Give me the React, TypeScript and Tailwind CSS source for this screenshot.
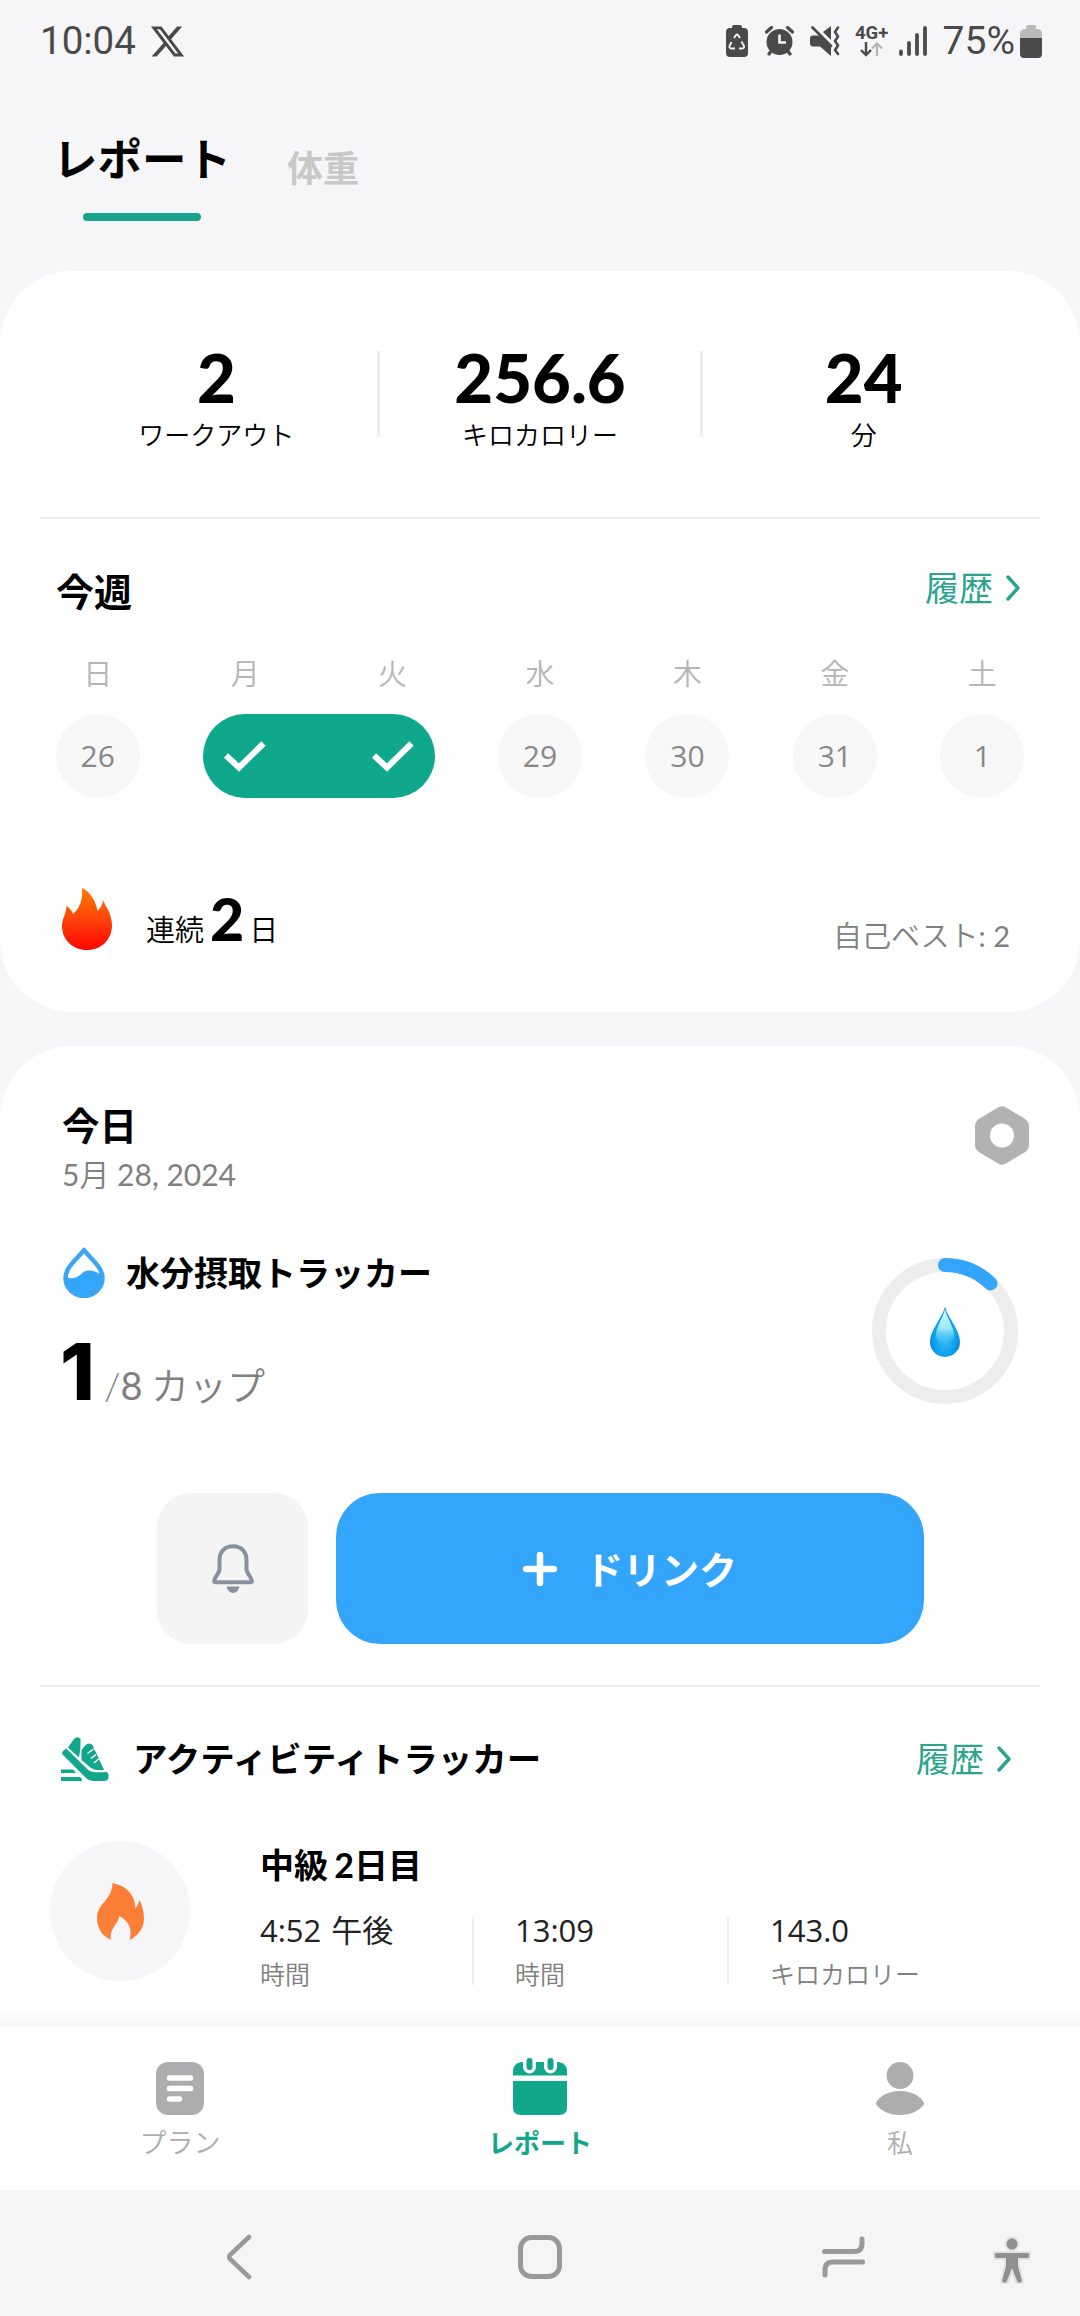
import React from 'react';
import { FaXTwitter } from 'react-icons/fa6';

const FONT = "font-['Lato','Noto_Sans_CJK_JP',sans-serif]";
const FONT_ALT = "font-['Open_Sans','Noto_Sans_CJK_JP',sans-serif]";

interface Stat {
  value: string;
  label: string;
}

const totals: Stat[] = [
  { value: '2', label: 'ワークアウト' },
  { value: '256.6', label: 'キロカロリー' },
  { value: '24', label: '分' },
];

const weekdays = ['日', '月', '火', '水', '木', '金', '土'];
const upcoming = ['29', '30', '31', '1'];

const activityStats: Stat[] = [
  { value: '4:52 午後', label: '時間' },
  { value: '13:09', label: '時間' },
  { value: '143.0', label: 'キロカロリー' },
];

/* ---------- Icons ---------- */

const BatterySaverIcon = () => (
  <svg width="22" height="33" viewBox="0 0 22 33">
    <path d="M6 3V2q0-2 2-2h6q2 0 2 2v1h2q4 0 4 4v21q0 4-4 4H4q-4 0-4-4V7q0-4 4-4z" fill="#4a4a4a" />
    <path d="M8 13l2-3q1-1 2 0l2 3M15.500 16.500l2.500 4.500q.5 2-1.500 2.500H13M9 23.500H5q-2-.5-1.500-2.500L5.500 17" fill="none" stroke="#f6f6f9" strokeWidth="1.800" />
  </svg>
);

const AlarmIcon = () => (
  <svg width="29" height="30" viewBox="0 0 29 30">
    <circle cx="14.500" cy="16" r="13" fill="#4a4a4a" />
    <path d="M1.500 6l5-4.500M27.500 6l-5-4.500M4 28l3-4M25 28l-3-4" stroke="#4a4a4a" strokeWidth="3.200" strokeLinecap="round" />
    <path d="M14.500 8.500v8h6.500" fill="none" stroke="#f6f6f9" strokeWidth="2.600" />
  </svg>
);

const MuteIcon = () => (
  <svg width="30" height="30" viewBox="0 0 30 30">
    <path d="M3 9.500h6l12 11V30L10 20.500H3q-3 0-3-3v-5q0-3 3-3zM13 6l8-6v14z" fill="#4a4a4a" />
    <path d="M2.500 1.500L21 20" stroke="#4a4a4a" strokeWidth="2.600" strokeLinecap="round" />
    <path d="M28 1.500l-3 4.500 3 4.500-3 4.500 3 4.500-3 4.500 3 4" fill="none" stroke="#4a4a4a" strokeWidth="2.600" strokeLinejoin="round" strokeLinecap="round" />
  </svg>
);

const DataArrowsIcon = () => (
  <svg width="23" height="15" viewBox="0 0 23 15">
    <path d="M6 0v13M1 8l5 5 5-5" fill="none" stroke="#4a4a4a" strokeWidth="2.400" />
    <path d="M17 14V2M12 6.500l5-5 5 5" fill="none" stroke="#b5b5b7" strokeWidth="2.200" />
  </svg>
);

const SignalIcon = () => (
  <svg width="29" height="30" viewBox="0 0 29 30">
    <path d="M2 25.500V28M10 17v11M18 9v19M26 2v26" stroke="#4a4a4a" strokeWidth="3.800" strokeLinecap="round" />
  </svg>
);

const BatteryIcon = () => (
  <svg width="22" height="33" viewBox="0 0 22 33">
    <path d="M6 4V2q0-2 2-2h6q2 0 2 2v2h1q5 0 5 5v4H0V9q0-5 5-5z" fill="#bababb" />
    <path d="M0 13h22v16q0 4-4 4H4q-4 0-4-4z" fill="#4a4a4a" />
  </svg>
);

const CheckIcon = () => (
  <svg width="42" height="31" viewBox="0 0 42 31">
    <path d="M2 14.500l13 12L39.500 2.500" fill="none" stroke="#fff" strokeWidth="6" />
  </svg>
);

const StreakFlameIcon = () => (
  <svg width="50" height="62" viewBox="0 0 50 62">
    <defs>
      <linearGradient id="streak" x1="0" y1="0" x2="0" y2="1">
        <stop offset="0" stopColor="#ff7a00" />
        <stop offset="0.500" stopColor="#fe4409" />
        <stop offset="1" stopColor="#ff0500" />
      </linearGradient>
    </defs>
    <path
      d="M20 0C29 4 34 14 35.500 23c3-3 5-6 5.500-11 2 6 9 13 9 25 0 15-11 25-25 25S0 52 0 38c0-8 4-11 4.500-20 3 2 5 4 6.500 8 7-6 10-15 9-26z"
      fill="url(#streak)"
    />
  </svg>
);

const NutIcon = () => (
  <svg width="54" height="59" viewBox="0 0 54 59">
    <path
      d="M23 1.500q4-2.500 8 0l18.500 11q4.500 3 4.500 7.500v19q0 4.500-4.500 7.500L31 57.500q-4 2.500-8 0L4.500 46.500Q0 43.500 0 39V20q0-4.500 4.500-7.500z"
      fill="#b2b2b2"
    />
    <circle cx="27" cy="29.500" r="12" fill="#fff" />
  </svg>
);

const WaterIcon = () => (
  <svg width="42" height="51" viewBox="0 0 42 51">
    <path d="M21 3C15 11 2.500 20 2.500 31a18.500 18 0 0 0 37 0C39.500 20 27 11 21 3z" fill="#fff" stroke="#3fa5ee" strokeWidth="4.500" strokeLinejoin="round" />
    <path d="M3 30c8 3 12 0 17-4.500 5-3.500 12-2 19 3v3.500a18 17 0 0 1-36 0z" fill="#33a5fb" />
  </svg>
);

const WaterRing = () => (
  <svg width="146" height="146" viewBox="0 0 146 146">
    <defs>
      <radialGradient id="dropBody" cx="0.500" cy="0.600" r="0.600">
        <stop offset="0" stopColor="#3fc0fb" />
        <stop offset="0.650" stopColor="#0a9fee" />
        <stop offset="1" stopColor="#1279b0" />
      </radialGradient>
      <linearGradient id="dropShine" x1="0" y1="0" x2="0" y2="1">
        <stop offset="0" stopColor="#d5fdff" />
        <stop offset="0.550" stopColor="#9be8fe" />
        <stop offset="1" stopColor="#2fb8f8" stopOpacity="0.300" />
      </linearGradient>
    </defs>
    <circle cx="73" cy="73" r="66" fill="none" stroke="#ededed" strokeWidth="14" />
    <path d="M73 7a66 66 0 0 1 45.500 18.500" fill="none" stroke="#33a5fb" strokeWidth="14" strokeLinecap="round" />
    <path d="M73 49c3 11 15 23 15 35a15 15 0 0 1-30 0c0-12 12-24 15-35z" fill="url(#dropBody)" />
    <path d="M73 51c2 9 9 18 9 26 0 5-4 9-9 9s-9-4-9-9c0-8 7-17 9-26z" fill="url(#dropShine)" />
  </svg>
);

const BellIcon = () => (
  <svg width="42" height="50" viewBox="0 0 42 50">
    <path
      d="M21 2.200C12.500 2.200 7.500 8 7.500 16v9c0 5-5.300 8-5.300 12 0 .8.500 1.300 1.300 1.300h35c.8 0 1.300-.5 1.300-1.300 0-4-5.300-7-5.300-12v-9c0-8-5-13.800-13.500-13.800z"
      fill="none"
      stroke="#88929e"
      strokeWidth="4"
      strokeLinejoin="round"
    />
    <path d="M14.500 42.500h13q-1.500 6.500-6.500 6.500t-6.500-6.500z" fill="#88929e" />
  </svg>
);

const PlusIcon = () => (
  <svg width="34" height="34" viewBox="0 0 34 34">
    <path d="M17 3v28M3 17h28" stroke="#fff" strokeWidth="6.500" strokeLinecap="round" />
  </svg>
);

const ShoeIcon = () => (
  <svg width="48" height="44" viewBox="0 0 48 44">
    <path d="M7 10.500L13 2q3.500-3.500 6.500 0 .5 9-1.500 18.500z" fill="#10a78b" />
    <path d="M20.500 23V13l4-5q4-3 7 0l2 5q2 3 3.500 7l6 13q-8 1-13-2z" fill="#10a78b" />
    <path d="M26.500 16.500l6-4.500M30 21.500l5-4M33 26l4.500-4" stroke="#fff" strokeWidth="1.500" />
    <path d="M5.500 11.500l22 21.500q3 2 7 2h9.500q3.500 0 3.500 3v2q0 4-5 4H32q-4 0-7-3L2 18q-2-2 0-4z" fill="#10a78b" />
    <path d="M6.500 11.500L28 32.500q3 2 7 2h8" fill="none" stroke="#fff" strokeWidth="1.600" />
    <path d="M0 32.500h12l3 3.500H0zM0 40h18q3 0 3 4H0z" fill="#10a78b" />
  </svg>
);

const FlameIcon = () => (
  <svg width="47" height="57" viewBox="0 0 47 57">
    <path d="M15.500 0C30 3 38 12 38.500 25.500q3-4 4-8.500C46 24 47 30 47 36c0 9-6 17-14.500 21 3-10 0-19-10.500-24 .5 7-10 12-8 24C5 53 0 45 0 35 0 20 15 18 15.500 0z" fill="#fd7f37" />
  </svg>
);

const PlanIcon = () => (
  <svg width="48" height="53" viewBox="0 0 48 53">
    <rect width="48" height="53" rx="12" fill="#adadaf" />
    <path d="M13.500 16h21M13.500 26.500h21M13.500 37h10" stroke="#fff" strokeWidth="5.500" strokeLinecap="round" />
  </svg>
);

const CalendarIcon = () => (
  <svg width="54" height="57" viewBox="0 0 54 57">
    <path d="M8 4h38q8 2 8 9v4.500H0V13q0-7 8-9z" fill="#10a78b" />
    <path d="M0 23h54v27q0 7-8 7H8q-8 0-8-7z" fill="#10a78b" />
    <path d="M16.500 3v6M37.500 3v6" stroke="#fff" strokeWidth="13" strokeLinecap="round" />
    <path d="M16.500 3v6M37.500 3v6" stroke="#10a78b" strokeWidth="6" strokeLinecap="round" />
  </svg>
);

const PersonIcon = () => (
  <svg width="48" height="53" viewBox="0 0 48 53">
    <circle cx="24" cy="13.500" r="13.500" fill="#adadaf" />
    <path d="M24 29c12 0 20 5 23.500 11q1 1.500 0 3C42 50 33 53 24 53S6 50 .5 43q-1-1.500 0-3C4 34 12 29 24 29z" fill="#adadaf" />
  </svg>
);

const ChevronIcon = () => (
  <svg width="14" height="26" viewBox="0 0 14 26">
    <path d="M2 2l10 11L2 24" fill="none" stroke="#2aa48e" strokeWidth="3.400" strokeLinecap="round" strokeLinejoin="round" />
  </svg>
);

/* ---------- Sections ---------- */

const StatusBar = () => (
  <div className="flex h-[82px] shrink-0 items-center pl-[40px] pr-[38px] font-['Roboto',sans-serif] text-[#4a4a4a]">
    <span className="text-[38.5px] leading-none">10:04</span>
    <FaXTwitter className="ml-[13px] h-[37px] w-[37px]" />
    <div className="ml-auto flex items-center">
      <BatterySaverIcon />
      <div className="ml-[17px]"><AlarmIcon /></div>
      <div className="ml-[16px]"><MuteIcon /></div>
      <div className="ml-[15px] flex w-[34px] flex-col items-center">
        <span className="text-[18.500px] font-bold leading-[17px]">4G+</span>
        <DataArrowsIcon />
      </div>
      <div className="ml-[10px]"><SignalIcon /></div>
      <span className="ml-[15px] text-[39px] leading-none">75%</span>
      <div className="ml-[5px]"><BatteryIcon /></div>
    </div>
  </div>
);

const HistoryLink = () => (
  <a className="flex items-center text-[34px] leading-none text-[#2aa48e]">
    <span>履歴</span>
    <span className="ml-[13px]"><ChevronIcon /></span>
  </a>
);

const DayCircle: React.FC<{ day: string }> = ({ day }) => (
  <div className="mx-auto flex h-[84px] w-[84px] items-center justify-center rounded-full bg-[#f7f7f7] pb-[2px] text-[30px] text-[#888888]">
    <span className={FONT_ALT}>{day}</span>
  </div>
);

const SummaryCard = () => (
  <section className="h-[741px] shrink-0 rounded-[72px] bg-white">
    <div className="flex h-[246px] pl-[56px] pr-[56px] pt-[72px]">
      {totals.map((item, i) => (
        <React.Fragment key={item.label}>
          {i > 0 && <div className="mt-[8px] h-[86px] w-[3px] bg-[#eeeeee]" />}
          <div className="flex flex-1 flex-col items-center">
            <div className="text-[67px] font-black leading-[68px]">{item.value}</div>
            <div className="mt-[11px] text-[26px] font-[350] leading-[26px]">{item.label}</div>
          </div>
        </React.Fragment>
      ))}
    </div>
    <div className="mx-[40px] h-[2px] bg-[#efefef]" />

    <div className="mt-[52px] flex h-[40px] items-center justify-between pl-[56px] pr-[60px]">
      <h2 className="text-[38px] font-bold leading-none">今週</h2>
      <div className="-mt-[6px]"><HistoryLink /></div>
    </div>

    <div className="mt-[49px] grid grid-cols-7 px-[24px] text-center text-[29px] font-[350] leading-[28px] text-[#b5b5b5]">
      {weekdays.map((day) => (
        <div key={day}>{day}</div>
      ))}
    </div>
    <div className="mt-[26px] grid grid-cols-7 px-[24px]">
      <DayCircle day="26" />
      <div className="col-span-2 ml-[32px] mr-[31px] flex h-[84px] items-center justify-between rounded-full bg-[#0fa88c] px-[21px]">
        <CheckIcon />
        <CheckIcon />
      </div>
      {upcoming.map((day) => (
        <DayCircle key={day} day={day} />
      ))}
    </div>

    <div className="mt-[90px] flex h-[62px] pl-[62px] pr-[70px]">
      <StreakFlameIcon />
      <div className="ml-[34px] flex items-baseline text-[29px] font-[350] leading-[62px]">
        <span>連続</span>
        <span className="ml-[6px] text-[59px] font-black">2</span>
        <span className="ml-[5px]">日</span>
      </div>
      <div className="ml-auto mt-[17px] text-[29px] leading-[62px] text-[#808080]">
        <span className="font-[350]">自己ベスト</span>: 2
      </div>
    </div>
  </section>
);

const TodayCard = () => (
  <section className="mt-[34px] flex-1 rounded-t-[72px] bg-white pt-[60px]">
    <div className="flex justify-between pl-[62px] pr-[51px]">
      <div>
        <h2 className="pt-[1px] text-[37.5px] font-bold leading-[38px]">今日</h2>
        <p className="mt-[14px] text-[30px] leading-[30px] text-[#808080]">
          5<span className="font-[350]">月</span> 28, 2024
        </p>
      </div>
      <NutIcon />
    </div>

    <div className="mt-[58px] flex h-[157px] justify-between pl-[63px] pr-[62px]">
      <div>
        <div className="flex items-center">
          <WaterIcon />
          <h3 className="ml-[21px] text-[34px] font-bold leading-[50px]">水分摂取トラッカー</h3>
        </div>
        <div className="mt-[33px] flex items-baseline leading-[80px]">
          <span className="-ml-[3px] w-[40px] font-['Inter',sans-serif] text-[79px] font-extrabold">1</span>
          <span className="ml-[4px] text-[38px] font-[350] text-[#808080] [word-spacing:-2px]">/<span className="font-normal">8</span> カップ</span>
        </div>
      </div>
      <div className="mt-[11px]"><WaterRing /></div>
    </div>

    <div className="mt-[89px] flex gap-[28px] pl-[157px]">
      <button className="flex h-[151px] w-[151px] items-center justify-center rounded-[34px] bg-[#f4f4f4]">
        <BellIcon />
      </button>
      <button className="flex h-[151px] w-[588px] items-center justify-center rounded-[44px] bg-[#33a5fb] text-white">
        <PlusIcon />
        <span className="ml-[28px] text-[38px] font-bold leading-none">ドリンク</span>
      </button>
    </div>

    <div className="mx-[40px] mt-[41px] h-[2px] bg-[#efefef]" />

    <div className="mt-[50px] flex h-[44px] items-center pl-[61px] pr-[69px]">
      <ShoeIcon />
      <h3 className="ml-[24px] text-[34.5px] font-bold leading-none">アクティビティトラッカー</h3>
      <div className="-mt-[1px] ml-auto"><HistoryLink /></div>
    </div>

    <div className="mt-[60px] flex pl-[50px]">
      <div className="flex h-[140px] w-[140px] items-center justify-center rounded-full bg-[#f6f6f9]">
        <FlameIcon />
      </div>
      <div className="ml-[70px] pt-[7px]">
        <h4 className="text-[34px] font-bold leading-[34px] [word-spacing:-2px]">中級 2日目</h4>
        <div className="mt-[35px] flex">
          {activityStats.map((item, i) => (
            <div key={item.value} className="flex">
              {i > 0 && <div className="mr-[41px] h-[68px] w-[2px] bg-[#efefef]" />}
              <div className="w-[212px]">
                <div className={`-mt-[2px] whitespace-nowrap text-[31px] leading-[30px] text-[#222222] [word-spacing:2px] ${FONT_ALT}`}>{item.value}</div>
                <div className="mt-[17px] text-[25px] font-[350] leading-[25px] text-[#808080]">{item.label}</div>
              </div>
            </div>
          ))}
        </div>
      </div>
    </div>
  </section>
);

const TabBar = () => (
  <nav className="relative grid h-[163px] shrink-0 grid-cols-3 bg-white text-[26px] leading-[26px] text-[#adadaf]">
    <div className="absolute inset-x-0 -top-4 h-4 bg-linear-to-b from-[#fdfdfd] to-[#f7f7f7]" />
    <div className="flex flex-col items-center pt-[35px]">
      <PlanIcon />
      <span className="mt-[15px] text-[27px] font-[350]">プラン</span>
    </div>
    <div className="flex flex-col items-center pt-[31px] text-[#10a78b]">
      <CalendarIcon />
      <span className="mt-[15px] font-bold">レポート</span>
    </div>
    <div className="flex flex-col items-center pt-[35px]">
      <PersonIcon />
      <span className="mt-[15px] font-[350]">私</span>
    </div>
  </nav>
);

const SystemBar = () => (
  <div className="flex h-[126px] shrink-0 items-center bg-[#f5f5f5] pl-[226px] pt-[12px]">
    <svg width="26" height="46" viewBox="0 0 26 46" className="mb-[5px]">
      <path d="M23 3L4 21q-1.500 2 0 4l19 18" fill="none" stroke="#999" strokeWidth="4.600" strokeLinecap="round" />
    </svg>
    <svg width="44" height="44" viewBox="0 0 44 44" className="mb-[5px] ml-[266px]">
      <rect x="2.500" y="2.500" width="39" height="39" rx="11" fill="none" stroke="#999" strokeWidth="5" />
    </svg>
    <svg width="43" height="42" viewBox="0 0 43 42" className="mb-[5px] ml-[260px]">
      <path d="M2.500 15.500H32q8 0 8-8V3M40.500 26H11q-8 0-8 8v5" fill="none" stroke="#999" strokeWidth="5" strokeLinecap="round" />
    </svg>
    <svg width="42" height="50" viewBox="0 0 42 50" className="mt-[3px] ml-[126px]">
      <g stroke="#e2e2e2" strokeWidth="4" fill="#e2e2e2" strokeLinejoin="round">
        <circle cx="21" cy="8" r="5.500" />
        <path d="M4 17h34v5H27v8l4 16h-5l-5-15-5 15h-5l4-16v-8H4z" />
      </g>
      <circle cx="21" cy="8" r="5.500" fill="#8f8f8f" />
      <path d="M5 17h32q2.500 2.500 0 5H27v8l4 15q-2 3-4.500 1L21 32l-5.500 14q-2.500 2-4.500-1l4-15v-8H5q-2.500-2.500 0-5z" fill="#8f8f8f" />
    </svg>
  </div>
);

const App: React.FC = () => {
  return (
    <div className={`flex h-[2316px] w-[1080px] flex-col overflow-hidden bg-[#f6f6f9] text-black ${FONT}`}>
      <StatusBar />
      <header className="flex h-[189px] shrink-0 pl-[53px]">
        <div className="flex flex-col items-center pt-[55px]">
          <h1 className="text-[44.5px] font-bold leading-[44px]">レポート</h1>
          <div className="mt-[32px] h-[8px] w-[118px] rounded-full bg-[#18a48c]" />
        </div>
        <div className="ml-[56px] pt-[68px] text-[36px] font-bold leading-[36px] text-[#c8c8c8]">体重</div>
      </header>
      <SummaryCard />
      <TodayCard />
      <TabBar />
      <SystemBar />
    </div>
  );
};

export default App;
